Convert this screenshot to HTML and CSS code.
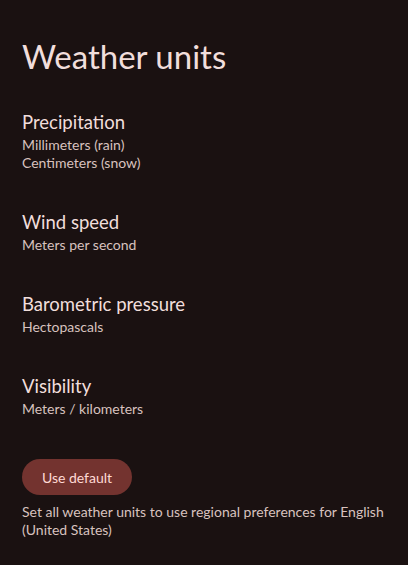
FILE: index.html
```html
<!DOCTYPE html>
<html>
<head>
<meta charset="utf-8">
<link rel="stylesheet" href="styles.css">
</head>
<body>
<div class="page">
  <h1 class="title">Weather units</h1>
  <div class="list">
    <div class="item">
      <div class="item-title">Precipitation</div>
      <div class="item-sub">Millimeters (rain)</div>
      <div class="item-sub">Centimeters (snow)</div>
    </div>
    <div class="item">
      <div class="item-title">Wind speed</div>
      <div class="item-sub">Meters per second</div>
    </div>
    <div class="item">
      <div class="item-title">Barometric pressure</div>
      <div class="item-sub">Hectopascals</div>
    </div>
    <div class="item">
      <div class="item-title">Visibility</div>
      <div class="item-sub">Meters / kilometers</div>
    </div>
  </div>
  <div class="footer">
    <button class="btn">Use default</button>
    <p class="note">Set all weather units to use regional preferences for English (United States)</p>
  </div>
</div>
</body>
</html>
```
FILE: styles.css
```css
html, body {
  margin: 0;
  padding: 0;
  background: #1a1111;
}
body {
  font-family: "Lato", "Roboto", sans-serif;
  color: #f1dedc;
  width: 408px;
  height: 565px;
  overflow: hidden;
}
.page {
  padding: 0 22px;
}
.title {
  margin: 0;
  padding-top: 33.5px;
  font-size: 33px;
  font-weight: 400;
  line-height: 44px;
}
.list {
  display: flex;
  flex-direction: column;
  padding-top: 30.5px;
}
.item {
  padding: 0 0 36px;
}
.item-title {
  font-size: 18.5px;
  line-height: 28px;
}
.item-sub {
  font-size: 14px;
  line-height: 18px;
  color: #d8c2bf;
}
.footer {
  padding-top: 5px;
}
.btn {
  display: block;
  height: 36px;
  width: 110px;
  border: none;
  border-radius: 18px;
  background: #73332f;
  color: #ffdad5;
  font-family: inherit;
  font-size: 14px;
  padding: 0;
}
.note {
  margin: 8px 0 0;
  font-size: 14px;
  line-height: 18px;
  color: #d8c2bf;
}
```
